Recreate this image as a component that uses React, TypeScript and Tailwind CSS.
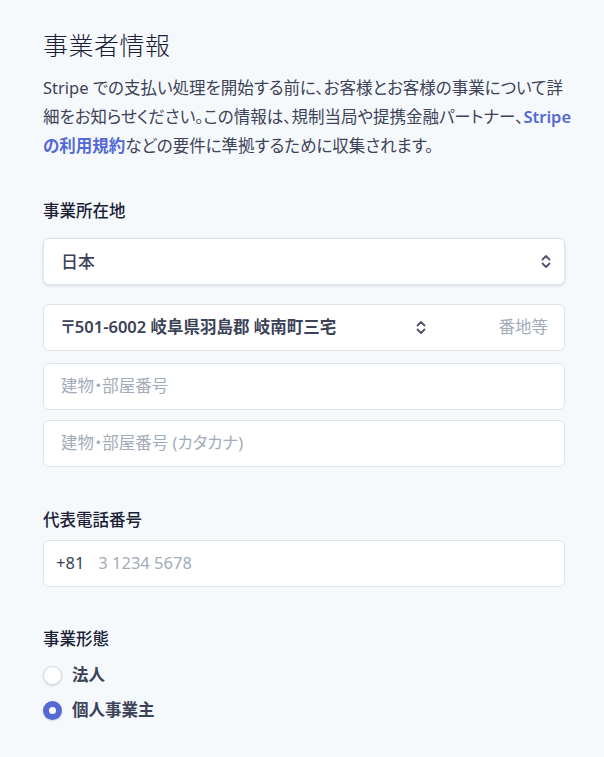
import React from 'react';

const Chevrons: React.FC<{ className?: string }> = ({ className }) => (
  <svg className={className} width="12" height="17" viewBox="0 0 12 17" fill="none">
    <path d="M2.5 6.5 6 3 9.5 6.5" stroke="#4f566b" strokeWidth="1.8" strokeLinecap="round" strokeLinejoin="round" />
    <path d="M2.5 10.5 6 14 9.5 10.5" stroke="#4f566b" strokeWidth="1.8" strokeLinecap="round" strokeLinejoin="round" />
  </svg>
);

const box =
  'h-[47px] w-full rounded-[6px] border border-[#dfe3e9] bg-white flex items-center';

export default function App() {
  return (
    <div className="min-h-[757px] w-full bg-[#f6f9fc] font-['Noto_Sans','Noto_Sans_CJK_JP',sans-serif] [font-feature-settings:'palt'] text-[#3c4257]">
      <div className="pl-[43px] pr-[39px] pt-[28px] pb-[30px] w-[604px]">
        {/* Heading */}
        <h1 className="text-[25px] leading-[35px] font-light text-[#1a1f36] tracking-[0.5px]">事業者情報</h1>
        <p className="mt-[10px] text-[16.5px] leading-[29px] whitespace-nowrap">
          Stripe での支払い処理を開始する前に、お客様とお客様の事業について詳
          <br />
          細をお知らせください。この情報は、規制当局や提携金融パートナー、
          <span className="font-semibold text-[#5469d4]">Stripe</span>
          <br />
          <span className="font-semibold text-[#5469d4]">の利用規約</span>
          などの要件に準拠するために収集されます。
        </p>

        {/* Address */}
        <div className="mt-[39px] text-[16.5px] leading-[24px] font-medium text-[#1a1f36]">事業所在地</div>
        <div className={`${box} mt-[15px] h-[46px] shadow-[0_1px_3px_rgba(60,66,87,0.16)] pl-[17px] pr-[12px] justify-between`}>
          <span className="text-[17px] font-medium text-[#3c4257]">日本</span>
          <Chevrons />
        </div>
        <div className={`${box} mt-[19px]`}>
          <div className="flex-1 flex items-center justify-between pl-[17px] pr-[12px]">
            <span className="text-[16.5px] font-semibold text-[#3c4257]">〒501-6002 岐阜県羽島郡 岐南町三宅</span>
            <Chevrons />
          </div>
          <div className="w-[125px] text-right pr-[16px] text-[16.5px] text-[#a3acb9]">番地等</div>
        </div>
        <div className={`${box} mt-[12px] px-[17px]`}>
          <span className="text-[16.5px] text-[#a3acb9]">建物・部屋番号</span>
        </div>
        <div className={`${box} mt-[10px] px-[17px]`}>
          <span className="text-[16.5px] text-[#a3acb9]">建物・部屋番号 (カタカナ)</span>
        </div>

        {/* Phone */}
        <div className="mt-[41px] text-[16.5px] leading-[24px] font-medium text-[#1a1f36]">代表電話番号</div>
        <div className={`${box} mt-[8px] px-[12px] gap-[14px]`}>
          <span className="text-[16.5px] text-[#3c4257]">+81</span>
          <span className="text-[16.5px] text-[#a3acb9]">3 1234 5678</span>
        </div>

        {/* Business type */}
        <div className="mt-[40px] text-[16.5px] leading-[24px] font-medium text-[#1a1f36]">事業形態</div>
        <div className="mt-[12px] flex flex-col gap-[11px]">
          <label className="flex items-center gap-[10px] h-[24px]">
            <span className="w-[19px] h-[19px] rounded-full bg-white border border-[#d5dae1] shadow-[0_1px_2px_rgba(60,66,87,0.2)]" />
            <span className="text-[16.5px] font-semibold text-[#3c4257]">法人</span>
          </label>
          <label className="flex items-center gap-[10px] h-[24px]">
            <span className="w-[19px] h-[19px] rounded-full bg-[#5469d4] flex items-center justify-center shadow-[0_1px_2px_rgba(60,66,87,0.2)]">
              <span className="w-[7px] h-[7px] rounded-full bg-white" />
            </span>
            <span className="text-[16.5px] font-semibold text-[#3c4257]">個人事業主</span>
          </label>
        </div>
      </div>
    </div>
  );
}
